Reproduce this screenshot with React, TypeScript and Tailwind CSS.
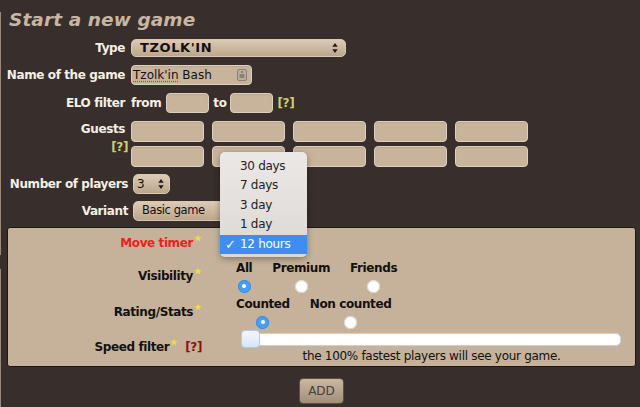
import React from "react";

function Star() {
  return (
    <svg viewBox="0 0 10 10" className="w-[8px] h-[8px] ml-[1px] -mt-[1px] shrink-0">
      <path
        d="M5 0.5 L6.2 3.8 L9.6 3.8 L6.9 5.9 L7.9 9.3 L5 7.2 L2.1 9.3 L3.1 5.9 L0.4 3.8 L3.8 3.8Z"
        fill="#f3dd3c"
      />
    </svg>
  );
}

function Arrows() {
  return (
    <svg viewBox="0 0 6 11" className="w-[6px] h-[10px] shrink-0">
      <path d="M3 0 L6 4 L0 4Z M3 11 L6 7 L0 7Z" fill="#1c1c1c" />
    </svg>
  );
}

function Radio({ on }: { on?: boolean }) {
  return on ? (
    <div className="w-[13px] h-[13px] rounded-full bg-[#4a9df4] flex items-center justify-center shadow-[inset_0_0_0_1px_#3b8be4]">
      <div className="w-[4px] h-[4px] rounded-full bg-white" />
    </div>
  ) : (
    <div className="w-[13px] h-[13px] rounded-full bg-white shadow-[inset_0_0_0_1px_#ddd3c8]" />
  );
}

function Opt({ label, on }: { label: string; on?: boolean }) {
  return (
    <div className="flex flex-col items-center">
      <div className="leading-[16px] text-[12px] font-bold text-[#111]">{label}</div>
      <div className="mt-[4px]">
        <Radio on={on} />
      </div>
    </div>
  );
}

const inputCls =
  "bg-[#c8b49b] border border-[#ddd0c0] rounded-[4px] shadow-[inset_0_1px_1px_rgba(0,0,0,0.08)]";

export default function App() {
  return (
    <div className="w-[640px] h-[407px] bg-[#382e2b] flex overflow-hidden relative font-['DejaVu_Sans',Verdana,sans-serif] tracking-[-0.4px]">
      <div className="w-px flex flex-col shrink-0">
        <div className="mt-[12px] h-[243px] bg-[#9a887a]" />
        <div className="mt-[14px] flex-1 bg-[#9a887a]" />
      </div>
      <div className="flex-1 flex flex-col">
        <div className="pt-[9px] pl-[8px] h-[31px] leading-[22px] text-[18.5px] font-bold italic text-[#c6b6a3] tracking-[0.1px]">
          Start a new game
        </div>

        {/* Type */}
        <div className="mt-[8px] flex items-center h-[18px]">
          <div className="w-[124px] text-right text-[12px] font-bold text-[#f6efe5]">Type</div>
          <div className="ml-[6px] w-[215px] h-[18px] rounded-[5px] border border-[#d8c7b3] bg-gradient-to-b from-[#dccab5] to-[#bca68d] flex items-center justify-between pl-[8px] pr-[7px]">
            <span className="text-[13px] font-bold text-[#111] tracking-[0.6px]">TZOLK'IN</span>
            <Arrows />
          </div>
        </div>

        {/* Name */}
        <div className="mt-[8px] flex items-center h-[20px]">
          <div className="w-[124px] text-right text-[12px] font-bold text-[#f6efe5]">Name of the game</div>
          <div className={`ml-[6px] w-[121px] h-[20px] ${inputCls} flex items-center justify-between pl-[1px] pr-[4px]`}>
            <span className="text-[12px] text-[#111] tracking-normal">
              <span className="underline decoration-dotted decoration-[#e0302a] underline-offset-2">Tzolk'in</span> Bash
            </span>
            <svg viewBox="0 0 10 12" className="w-[10px] h-[12px]">
              <rect x="0.5" y="0.5" width="9" height="11" rx="1.5" fill="#bcae9f" stroke="#8d8177" />
              <rect x="4" y="2" width="2" height="2" fill="#8d8177" />
              <rect x="2.5" y="5" width="5" height="4" rx="0.8" fill="#8d8177" />
            </svg>
          </div>
        </div>

        {/* ELO */}
        <div className="mt-[8px] flex items-center h-[20px] text-[12px] font-bold text-[#f6efe5]">
          <div className="w-[124px] text-right">ELO filter</div>
          <span className="ml-[6px]">from</span>
          <div className={`ml-[5px] w-[43px] h-[20px] ${inputCls}`} />
          <span className="ml-[4px]">to</span>
          <div className={`ml-[4px] w-[43px] h-[20px] ${inputCls}`} />
          <span className="ml-[4px] text-[#cfcf6c]">[?]</span>
        </div>

        {/* Guests */}
        <div className="mt-[8px] flex items-start">
          <div className="w-[124px] flex flex-col items-end text-[12px] font-bold leading-[15px] pt-[1px]">
            <span className="text-[#f6efe5]">Guests</span>
            <span className="mt-[3px] -mr-[3px] text-[#cfcf6c]">[?]</span>
          </div>
          <div className="ml-[6px] grid grid-cols-5 gap-x-[8px] gap-y-[4px]">
            {Array.from({ length: 10 }).map((_, i) => (
              <div key={i} className={`w-[73px] h-[21px] ${inputCls}`} />
            ))}
          </div>
        </div>

        {/* Number of players */}
        <div className="mt-[7px] flex items-center h-[20px]">
          <div className="w-[127px] text-right text-[12px] font-bold text-[#f6efe5]">Number of players</div>
          <div className="ml-[5px] w-[37px] h-[20px] rounded-[5px] border border-[#d8c7b3] bg-gradient-to-b from-[#dccab5] to-[#bca68d] flex items-center justify-between pl-[3px] pr-[5px]">
            <span className="text-[12px] text-[#111]">3</span>
            <Arrows />
          </div>
        </div>

        {/* Variant */}
        <div className="mt-[7px] flex items-center h-[20px]">
          <div className="w-[127px] text-right text-[12px] font-bold text-[#f6efe5]">Variant</div>
          <div className="ml-[5px] w-[100px] h-[20px] rounded-[5px] border border-[#d8c7b3] bg-gradient-to-b from-[#dccab5] to-[#bca68d] flex items-center pl-[8px]">
            <span className="text-[11.5px] text-[#111] tracking-[-0.4px]">Basic game</span>
          </div>
        </div>

        {/* Panel */}
        <div className="mt-[6px] ml-[6px] w-[629px] h-[140px] border border-[#1e1714] rounded-[3px] bg-[#c6b29a] pt-[7px] text-[12px] font-bold text-[#111]">
          <div className="flex items-start h-[16px]">
            <div className="w-[194px] flex justify-end items-start leading-[16px] text-[#f01d1d]">
              <span>Move timer</span>
              <Star />
            </div>
          </div>

          <div className="mt-[8.5px] flex items-center">
            <div className="w-[194px] flex justify-end items-start leading-[16px]">
              <span>Visibility</span>
              <Star />
            </div>
            <div className="ml-[34px] flex gap-[20px]">
              <Opt label="All" on />
              <Opt label="Premium" />
              <Opt label="Friends" />
            </div>
          </div>

          <div className="mt-[3px] flex items-center">
            <div className="w-[194px] flex justify-end items-start leading-[16px]">
              <span>Rating/Stats</span>
              <Star />
            </div>
            <div className="ml-[34px] flex gap-[20px]">
              <Opt label="Counted" on />
              <Opt label="Non counted" />
            </div>
          </div>

          <div className="mt-[1.5px] flex items-center">
            <div className="w-[194px] flex justify-end items-start leading-[16px]">
              <span>Speed filter</span>
              <Star />
              <span className="ml-[7px] text-[#8c1010]">[?]</span>
            </div>
            <div className="ml-[40px] flex flex-col w-[379px]">
              <div className="relative h-[18px] flex items-center">
                <div className="w-full h-[13px] bg-white border border-[#bcd5ef] rounded-[5px]" />
                <div className="absolute left-[-1px] top-0 w-[19px] h-[18px] rounded-[4px] border border-[#b3cbe6] bg-gradient-to-b from-[#f4f8fd] to-[#d6e5f5]" />
              </div>
              <div className="leading-[16px] text-center font-normal text-[12px] text-[#111] tracking-[-0.3px]">
                the 100% fastest players will see your game.
              </div>
            </div>
          </div>
        </div>

        {/* ADD */}
        <div className="mt-[11px] ml-[298px] w-[45px] h-[26px] rounded-[4px] border border-[#5e4f43] bg-gradient-to-b from-[#cbb7a0] to-[#a28f7b] flex items-center justify-center text-[12px] text-[#4a3f38] tracking-normal">
          ADD
        </div>
      </div>

      {/* Dropdown popup */}
      <div className="absolute left-[220px] top-[152px] w-[87px] h-[105px] rounded-[5px] bg-gradient-to-b from-[#ebe8e6] to-[#dcd8d4] shadow-[0_2px_6px_rgba(0,0,0,0.35)] pt-[4.5px] text-[12px] tracking-[-0.3px] text-[#222]">
        {["30 days", "7 days", "3 day", "1 day"].map((t) => (
          <div key={t} className="h-[19.5px] leading-[19.5px] pl-[20px]">
            {t}
          </div>
        ))}
        <div className="h-[19.5px] leading-[19.5px] bg-[#3d8ef0] text-white flex items-center">
          <span className="w-[20px] pl-[5px] text-[13px] font-bold">✓</span>
          <span>12 hours</span>
        </div>
      </div>
    </div>
  );
}
